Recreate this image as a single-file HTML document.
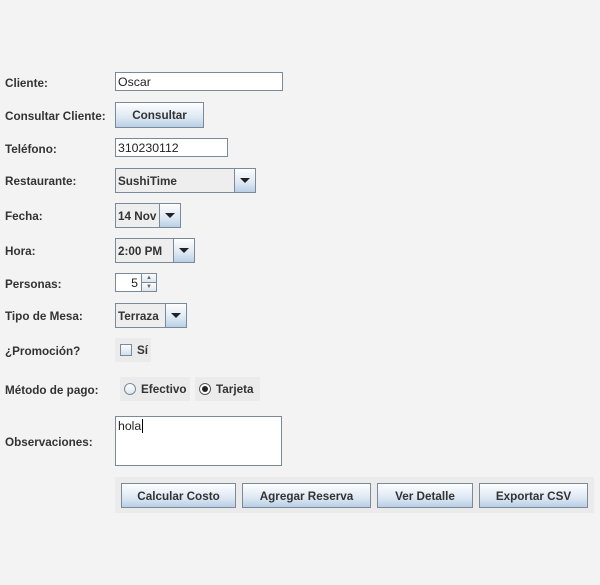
<!DOCTYPE html>
<html><head><meta charset="utf-8"><style>
body{margin:0;width:600px;height:585px;background:#f3f3f3;font-family:"Liberation Sans",Arial,sans-serif;font-size:11.7px;color:#333;position:relative;overflow:hidden}
.a{position:absolute;box-sizing:border-box}
.l{position:absolute;left:5px;font-weight:bold;line-height:14px;margin-top:1px}
.tf{background:#fff;border:1px solid #7a8a99;font-weight:normal;padding-left:2px;line-height:19px;color:#222;font-size:12.3px}
.btn{border:1px solid #7a8a99;background:linear-gradient(#fdfeff,#dde8f3 60%,#b9cfe6);font-weight:bold;text-align:center;color:#333}
.cb{border:1px solid #7a8a99;background:#eeeeee;font-weight:bold;padding-left:2px}
.arr{position:absolute;right:0;top:0;bottom:0;width:20px;border-left:1px solid #7a8a99;background:linear-gradient(#fdfeff,#dde8f3 60%,#b9cfe6)}
.arr:after{content:"";position:absolute;left:5px;top:9px;border-left:5px solid transparent;border-right:5px solid transparent;border-top:5px solid #222}
.pn{background:#ebebeb}
</style></head><body>
<div class="l" style="top:76px">Cliente:</div>
<div class="a tf" style="left:115px;top:72px;width:168px;height:19px">Oscar</div>
<div class="l" style="top:109px">Consultar Cliente:</div>
<div class="a btn" style="left:115px;top:102px;width:89px;height:26px;line-height:26px">Consultar</div>
<div class="l" style="top:142px">Teléfono:</div>
<div class="a tf" style="left:115px;top:138px;width:113px;height:19px">310230112</div>
<div class="l" style="top:174px">Restaurante:</div>
<div class="a cb" style="left:115px;top:168px;width:141px;height:25px;line-height:25px">SushiTime<div class="arr"></div></div>
<div class="l" style="top:209px">Fecha:</div>
<div class="a cb" style="left:115px;top:203px;width:66px;height:25px;line-height:25px">14 Nov<div class="arr"></div></div>
<div class="l" style="top:244px">Hora:</div>
<div class="a cb" style="left:115px;top:238px;width:80px;height:25px;line-height:25px">2:00 PM<div class="arr"></div></div>
<div class="l" style="top:277px">Personas:</div>
<div class="a tf" style="left:115px;top:273px;width:42px;height:19px;text-align:right;padding-right:18px">5</div>
<div class="a" style="left:141px;top:273px;width:16px;height:10px;border:1px solid #7a8a99;background:linear-gradient(#fff,#dde6ee);font-size:6px;text-align:center;line-height:8px;color:#666">▲</div>
<div class="a" style="left:141px;top:282px;width:16px;height:10px;border:1px solid #7a8a99;background:linear-gradient(#fff,#dde6ee);font-size:6px;text-align:center;line-height:8px;color:#666">▼</div>
<div class="l" style="top:309px">Tipo de Mesa:</div>
<div class="a cb" style="left:115px;top:303px;width:72px;height:25px;line-height:25px">Terraza<div class="arr"></div></div>
<div class="l" style="top:344px;font-weight:bold">¿Promoción?</div>
<div class="a pn" style="left:115px;top:338px;width:36px;height:24px"></div>
<div class="a" style="left:120px;top:344px;width:12px;height:12px;border:1px solid #7a8a99;background:linear-gradient(#fdfeff,#cfdeed)"></div>
<div class="a" style="left:137px;top:344px;font-weight:bold;line-height:14px">Sí</div>
<div class="l" style="top:383px">Método de pago:</div>
<div class="a pn" style="left:120px;top:377px;width:70px;height:24px"></div>
<div class="a pn" style="left:195px;top:377px;width:65px;height:24px"></div>
<div class="a" style="left:124px;top:383px;width:12px;height:12px;border:1px solid #7a8a99;border-radius:50%;background:linear-gradient(#fff,#dde6ee)"></div>
<div class="a" style="left:141px;top:383px;font-weight:bold;line-height:14px">Efectivo</div>
<div class="a" style="left:199px;top:383px;width:12px;height:12px;border:1px solid #555;border-radius:50%;background:#fff"></div>
<div class="a" style="left:202px;top:386px;width:6px;height:6px;border-radius:50%;background:#222"></div>
<div class="a" style="left:216px;top:383px;font-weight:bold;line-height:14px">Tarjeta</div>
<div class="l" style="top:435px">Observaciones:</div>
<div class="a tf" style="left:115px;top:416px;width:167px;height:50px;line-height:16px;padding-top:1px">hola<span style="border-left:1px solid #000;margin-left:1px"></span></div>
<div class="a pn" style="left:115px;top:477px;width:479px;height:36px"></div>
<div class="a btn" style="left:121px;top:483px;width:115px;height:25px;line-height:25px">Calcular Costo</div>
<div class="a btn" style="left:242px;top:483px;width:129px;height:25px;line-height:25px">Agregar Reserva</div>
<div class="a btn" style="left:377px;top:483px;width:96px;height:25px;line-height:25px">Ver Detalle</div>
<div class="a btn" style="left:479px;top:483px;width:109px;height:25px;line-height:25px">Exportar CSV</div>
</body></html>
